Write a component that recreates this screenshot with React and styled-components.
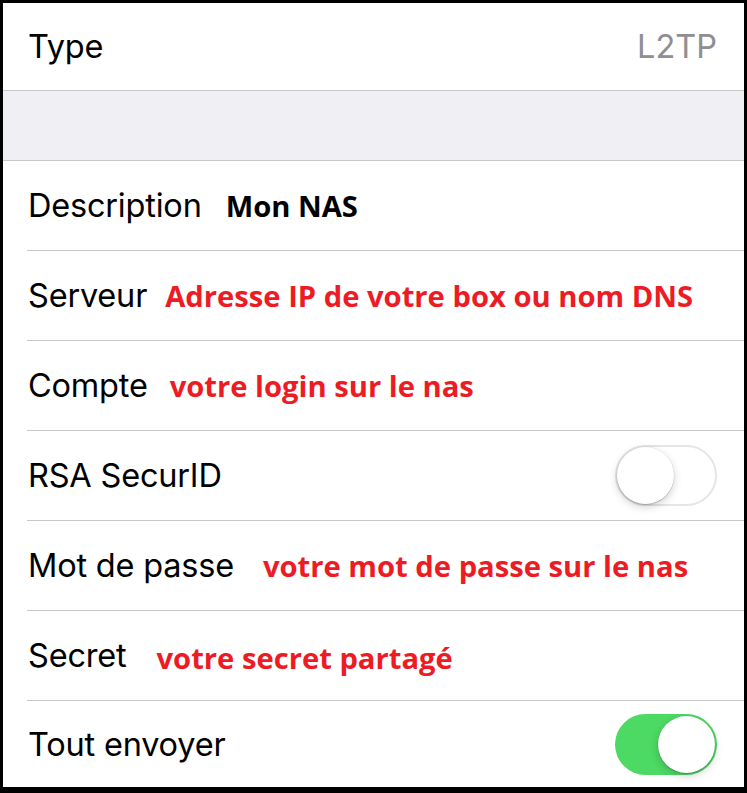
import React, { useState } from 'react';
import styled, { createGlobalStyle } from 'styled-components';

const GlobalStyle = createGlobalStyle`
  html, body {
    margin: 0;
    padding: 0;
    background: #000;
  }
`;

const Frame = styled.div`
  width: 747px;
  height: 793px;
  box-sizing: border-box;
  border-style: solid;
  border-color: #000;
  border-width: 3px 3px 6px 3px;
  background: #fff;
  display: flex;
  flex-direction: column;
  overflow: hidden;
  font-family: Inter, "Liberation Sans", sans-serif;
`;

const Group = styled.div`
  display: flex;
  flex-direction: column;
  flex: ${props => (props.grow ? 1 : 'none')};
`;

const Row = styled.div`
  height: ${props => props.h || 89}px;
  flex: none;
  margin-left: 24px;
  padding-left: 1px;
  padding-right: 27px;
  display: flex;
  align-items: center;
  border-bottom: ${props => (props.noLine ? 'none' : '1px solid #c8c7cc')};
`;

const Spacer = styled.div`
  height: 70px;
  background: #efeff4;
  border-top: 1px solid #c8c7cc;
  border-bottom: 1px solid #c8c7cc;
`;

const Label = styled.span`
  font-size: 32.5px;
  color: #000;
  letter-spacing: -0.2px;
  white-space: nowrap;
  margin-right: ${props => props.gap || 0}px;
`;

const Value = styled.span`
  margin-left: auto;
  font-size: 32.5px;
  color: #8e8e93;
`;

const Note = styled.span`
  font-family: "Open Sans", "Liberation Sans", sans-serif;
  font-weight: 700;
  font-size: 29.2px;
  color: ${props => (props.dark ? '#000' : '#ed1c24')};
  white-space: nowrap;
  margin-top: ${props => props.dy || 0}px;
`;

const Track = styled.div`
  margin-left: auto;
  position: relative;
  width: 102px;
  height: 61px;
  box-sizing: border-box;
  border-radius: 31px;
  background: ${props => (props.on ? '#4cd964' : '#fff')};
  border: ${props => (props.on ? 'none' : '2px solid #e5e5ea')};
  cursor: pointer;
`;

const Knob = styled.div`
  position: absolute;
  top: ${props => (props.on ? 2 : 0)}px;
  left: ${props => (props.on ? 43 : 0)}px;
  width: 57px;
  height: 57px;
  border-radius: 50%;
  background: #fff;
  box-shadow: 0 3px 8px rgba(0, 0, 0, 0.18), 0 1px 1px rgba(0, 0, 0, 0.16), 0 0 0 0.5px rgba(0, 0, 0, 0.08);
`;

const Switch = ({ on, onToggle }) => (
  <Track on={on} onClick={onToggle}>
    <Knob on={on} />
  </Track>
);

export default () => {
  const [rsa, setRsa] = useState(false);
  const [sendAll, setSendAll] = useState(true);

  return (
    <>
      <GlobalStyle />
      <Frame>
        <Group>
          <Row h={87} noLine>
            <Label>Type</Label>
            <Value>L2TP</Value>
          </Row>
        </Group>
        <Spacer />
        <Group grow>
          <Row>
            <Label gap={24}>Description</Label>
            <Note dark>Mon NAS</Note>
          </Row>
          <Row>
            <Label gap={18}>Serveur</Label>
            <Note>Adresse IP de votre box ou nom DNS</Note>
          </Row>
          <Row>
            <Label gap={22}>Compte</Label>
            <Note>votre login sur le nas</Note>
          </Row>
          <Row>
            <Label>RSA SecurID</Label>
            <Switch on={rsa} onToggle={() => setRsa(!rsa)} />
          </Row>
          <Row>
            <Label gap={29}>Mot de passe</Label>
            <Note>votre mot de passe sur le nas</Note>
          </Row>
          <Row>
            <Label gap={30}>Secret</Label>
            <Note dy={4}>votre secret partagé</Note>
          </Row>
          <Row h={86} noLine>
            <Label>Tout envoyer</Label>
            <Switch on={sendAll} onToggle={() => setSendAll(!sendAll)} />
          </Row>
        </Group>
      </Frame>
    </>
  );
}
